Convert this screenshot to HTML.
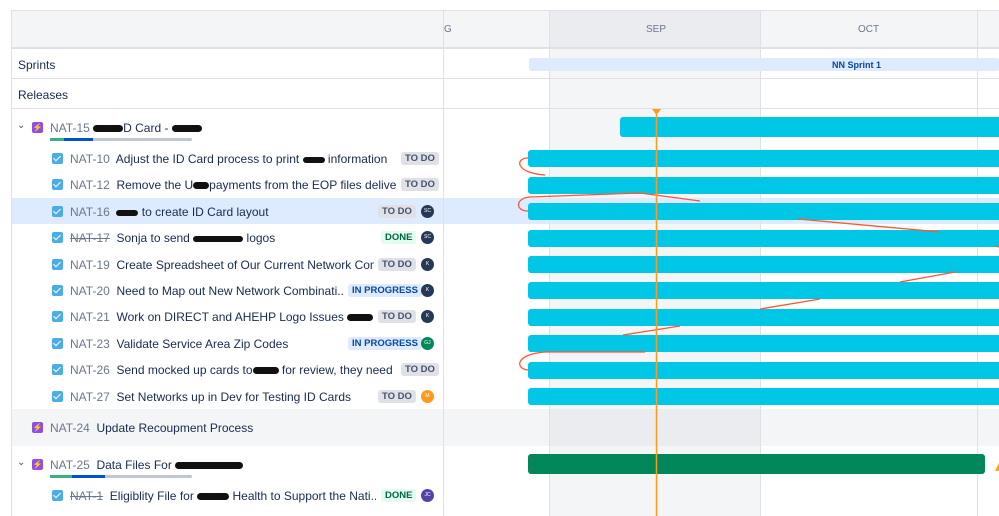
<!DOCTYPE html>
<html><head><style>
*{margin:0;padding:0;box-sizing:border-box}
body{width:999px;height:516px;overflow:hidden;background:#fff;font-family:"Liberation Sans",sans-serif;font-size:12px;color:#172b4d;position:relative}
.a{position:absolute}
.t{position:absolute;white-space:nowrap;line-height:14px;overflow:hidden}
.k{color:#6b778c}
.cb{position:absolute;width:11px;height:11px;background:#4bade8;border-radius:2px}
.cb:after{content:"";position:absolute;left:3px;top:1px;width:3px;height:6px;border:solid #fff;border-width:0 1.6px 1.6px 0;transform:rotate(45deg)}
.ep{position:absolute;width:11px;height:11px;background:#904ee2;border-radius:2px;color:#fff;font-size:8px;text-align:center;line-height:11px}
.bd{position:absolute;height:13px;line-height:13px;font-size:9.5px;font-weight:bold;padding:0 4px;border-radius:3px;background:#dfe1e6;color:#42526e}
.bd.d{background:#e3fcef;color:#006644}
.bd.p{background:#deebff;color:#0747a6}
.av{position:absolute;width:13px;height:13px;border-radius:50%;background:#253858;color:#fff;font-size:5px;text-align:center;line-height:13px}
.bar{position:absolute;left:528px;width:480px;height:17px;background:#00c7e6;border-radius:3px}
.s{display:inline-block;background:#111;border-radius:4px;vertical-align:middle}
</style></head><body>
<div class="a" style="left:549px;top:49px;width:211px;height:467px;background:#f4f5f7"></div>
<div class="a" style="left:11px;top:409px;width:988px;height:37px;background:#f4f5f7"></div>
<div class="a" style="left:549px;top:409px;width:211px;height:37px;background:#ebecf0"></div>
<div class="a" style="left:11px;top:198px;width:988px;height:26px;background:#deebff"></div>
<div class="a" style="left:11px;top:10px;width:988px;height:39px;background:#f4f5f7;border-top:1px solid #dfe1e6;border-bottom:2px solid #dfe1e6;border-left:1px solid #dfe1e6"></div>
<div class="a" style="left:549px;top:10px;width:211px;height:39px;background:#ebecf0;border-top:1px solid #dfe1e6;border-bottom:2px solid #dfe1e6"></div>
<div class="t k" style="left:444px;top:23px;font-size:10px">G</div>
<div class="t k" style="left:646px;top:23px;font-size:10px">SEP</div>
<div class="t k" style="left:858px;top:23px;font-size:10px">OCT</div>
<div class="a" style="left:11px;top:10px;width:1px;height:506px;background:#dfe1e6"></div>
<div class="a" style="left:443px;top:10px;width:1px;height:506px;background:#dfe1e6"></div>
<div class="a" style="left:549px;top:10px;width:1px;height:506px;background:#dfe1e6"></div>
<div class="a" style="left:760px;top:10px;width:1px;height:506px;background:#dfe1e6"></div>
<div class="a" style="left:977px;top:10px;width:1px;height:506px;background:#dfe1e6"></div>
<div class="a" style="left:11px;top:78px;width:988px;height:1px;background:#dfe1e6"></div>
<div class="a" style="left:11px;top:108px;width:988px;height:1px;background:#dfe1e6"></div>
<div class="t" style="left:18px;top:58px">Sprints</div>
<div class="t" style="left:18px;top:88px">Releases</div>
<div class="a" style="left:529px;top:58px;width:470px;height:13px;background:#deebff;border-radius:2px"></div>
<div class="t" style="left:832px;top:58px;font-size:9px;font-weight:bold;color:#0747a6">NN Sprint 1</div>

<div class="t" style="left:17px;top:119px;font-size:10px;color:#42526e">&#8964;</div>
<div class="ep" style="left:32px;top:122px">&#9889;</div>
<div class="t" style="left:50px;top:121px"><span class="k">NAT-15</span> <span class="s" style="width:30px;height:7px"></span>D Card - <span class="s" style="width:30px;height:7px"></span></div>
<div class="a" style="left:50px;top:138px;width:142px;height:3px;background:#c1c7d0;border-radius:2px"></div>
<div class="a" style="left:50px;top:138px;width:14px;height:3px;background:#36b37e"></div>
<div class="a" style="left:64px;top:138px;width:29px;height:3px;background:#0052cc"></div>

<div class="cb" style="left:52px;top:153px"></div><div class="t" style="left:70px;top:152px;width:326px"><span class="k">NAT-10</span>&nbsp; Adjust the ID Card process to print <span class="s" style="width:22px;height:6px"></span> information</div><div class="bd" style="left:401px;top:152px">TO DO</div>
<div class="cb" style="left:52px;top:179px"></div><div class="t" style="left:70px;top:178px;width:326px"><span class="k">NAT-12</span>&nbsp; Remove the U<span class="s" style="width:16px;height:7px"></span>payments from the EOP files deliver...</div><div class="bd" style="left:401px;top:178px">TO DO</div>
<div class="cb" style="left:52px;top:206px"></div><div class="t" style="left:70px;top:205px;width:300px"><span class="k">NAT-16</span>&nbsp; <span class="s" style="width:22px;height:6px"></span> to create ID Card layout</div><div class="bd" style="left:378px;top:205px">TO DO</div><div class="av" style="left:421px;top:205px">SC</div>
<div class="cb" style="left:52px;top:232px"></div><div class="t" style="left:70px;top:231px;width:300px"><span class="k" style="text-decoration:line-through">NAT-17</span>&nbsp; Sonja to send <span class="s" style="width:50px;height:6px"></span> logos</div><div class="bd d" style="left:381px;top:231px">DONE</div><div class="av" style="left:421px;top:231px">SC</div>
<div class="cb" style="left:52px;top:259px"></div><div class="t" style="left:70px;top:258px;width:304px"><span class="k">NAT-19</span>&nbsp; Create Spreadsheet of Our Current Network Com...</div><div class="bd" style="left:378px;top:258px">TO DO</div><div class="av" style="left:421px;top:258px">K</div>
<div class="cb" style="left:52px;top:285px"></div><div class="t" style="left:70px;top:284px;width:274px"><span class="k">NAT-20</span>&nbsp; Need to Map out New Network Combinati...</div><div class="bd p" style="left:348px;top:284px">IN PROGRESS</div><div class="av" style="left:421px;top:284px">K</div>
<div class="cb" style="left:52px;top:311px"></div><div class="t" style="left:70px;top:310px;width:304px"><span class="k">NAT-21</span>&nbsp; Work on DIRECT and AHEHP Logo Issues <span class="s" style="width:26px;height:7px"></span> L...</div><div class="bd" style="left:378px;top:310px">TO DO</div><div class="av" style="left:421px;top:310px">K</div>
<div class="cb" style="left:52px;top:338px"></div><div class="t" style="left:70px;top:337px;width:274px"><span class="k">NAT-23</span>&nbsp; Validate Service Area Zip Codes</div><div class="bd p" style="left:348px;top:337px">IN PROGRESS</div><div class="av" style="left:421px;top:337px;background:#00875a">GJ</div>
<div class="cb" style="left:52px;top:364px"></div><div class="t" style="left:70px;top:363px;width:326px"><span class="k">NAT-26</span>&nbsp; Send mocked up cards to<span class="s" style="width:26px;height:7px"></span> for review, they need ...</div><div class="bd" style="left:401px;top:363px">TO DO</div>
<div class="cb" style="left:52px;top:391px"></div><div class="t" style="left:70px;top:390px;width:304px"><span class="k">NAT-27</span>&nbsp; Set Networks up in Dev for Testing ID Cards</div><div class="bd" style="left:378px;top:390px">TO DO</div><div class="av" style="left:421px;top:390px;background:#ff991f">M</div>

<div class="ep" style="left:32px;top:422px">&#9889;</div>
<div class="t" style="left:50px;top:421px"><span class="k">NAT-24</span>&nbsp; Update Recoupment Process</div>

<div class="t" style="left:17px;top:456px;font-size:10px;color:#42526e">&#8964;</div>
<div class="ep" style="left:32px;top:459px">&#9889;</div>
<div class="t" style="left:50px;top:458px"><span class="k">NAT-25</span>&nbsp; Data Files For <span class="s" style="width:68px;height:7px"></span></div>
<div class="a" style="left:50px;top:475px;width:142px;height:3px;background:#c1c7d0;border-radius:2px"></div>
<div class="a" style="left:50px;top:475px;width:22px;height:3px;background:#36b37e"></div>
<div class="a" style="left:72px;top:475px;width:33px;height:3px;background:#0052cc"></div>
<div class="cb" style="left:52px;top:490px"></div><div class="t" style="left:70px;top:489px;width:306px"><span class="k" style="text-decoration:line-through">NAT-1</span>&nbsp; Eligiblity File for <span class="s" style="width:32px;height:7px"></span> Health to Support the Nati...</div><div class="bd d" style="left:381px;top:489px">DONE</div><div class="av" style="left:421px;top:489px;background:#5243aa">JC</div>

<div class="a" style="left:620px;top:117px;width:400px;height:20px;background:#00c7e6;border-radius:3px"></div>
<div class="bar" style="top:150px"></div>
<div class="bar" style="top:177px"></div>
<div class="bar" style="top:203px"></div>
<div class="bar" style="top:230px"></div>
<div class="bar" style="top:256px"></div>
<div class="bar" style="top:282px"></div>
<div class="bar" style="top:309px"></div>
<div class="bar" style="top:335px"></div>
<div class="bar" style="top:362px"></div>
<div class="bar" style="top:388px"></div>
<div class="a" style="left:528px;top:454px;width:457px;height:20px;background:#00875a;border-radius:3px"></div>
<svg class="a" style="left:0;top:0" width="999" height="516">
<path d="M528 158 C515 158,515 173,545 175" fill="none" stroke="#ff5630" stroke-width="1.3"/>
<path d="M528 211 C515 211,515 198,530 197 L640 193 L700 201" fill="none" stroke="#ff5630" stroke-width="1.3"/>
<path d="M798 219 L940 232" fill="none" stroke="#ff5630" stroke-width="1.3"/>
<path d="M623 335 L680 326 M760 309 L820 299 M900 282 L955 272 M995 246 L999 247" fill="none" stroke="#ff5630" stroke-width="1.3"/>
<path d="M645 352 L545 352 C515 354,515 369,528 370" fill="none" stroke="#ff5630" stroke-width="1.3"/>
<path d="M995 471 L999 463 L999 471 Z" fill="#ffab00"/>
<line x1="656.5" y1="110" x2="656.5" y2="516" stroke="#ff991f" stroke-width="1.5"/>
<path d="M652 109 L661 109 L656.5 115 Z" fill="#ff991f"/>
</svg>
</body></html>
